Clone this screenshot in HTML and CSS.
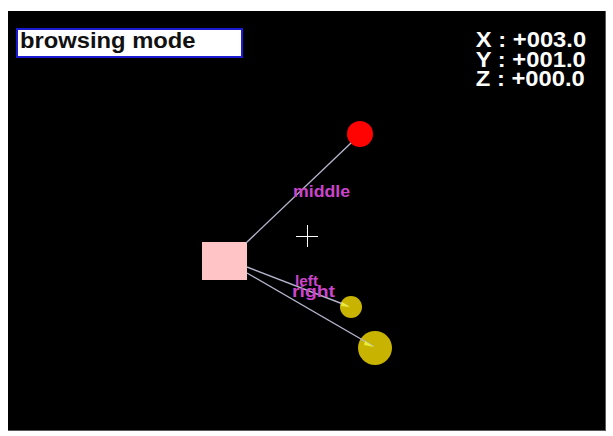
FILE: index.html
```html
<!DOCTYPE html>
<html>
<head>
<meta charset="utf-8">
<link rel="stylesheet" href="styles.css">
</head>
<body>
<div class="screen">
  <svg class="scene" viewBox="8 11 597 419" width="597" height="419" xmlns="http://www.w3.org/2000/svg">
    <circle cx="360" cy="134" r="13" fill="#ff0202"/>
    <circle cx="351" cy="307" r="11" fill="#c8b400"/>
    <circle cx="375" cy="348" r="17" fill="#c8b400"/>
    <rect x="202" y="242" width="45" height="38" fill="#ffc4c6"/>
    <g stroke="#b4b4cc" stroke-width="1.4" fill="none">
      <line x1="246" y1="243" x2="351" y2="143"/>
      <line x1="247" y1="267" x2="348" y2="306"/>
      <line x1="247" y1="273" x2="373" y2="346"/>
    </g>
    <g fill="#ecec30">
      <polygon points="350,307 342,302 341,306"/>
      <polygon points="374,347 365,341 364,345"/>
    </g>
    <g stroke="#ffffff" stroke-width="1" shape-rendering="crispEdges">
      <line x1="296" y1="236.5" x2="318" y2="236.5"/>
      <line x1="307.5" y1="225" x2="307.5" y2="247"/>
    </g>
    <g class="tag">
      <text x="293" y="197" font-size="16" textLength="57" lengthAdjust="spacingAndGlyphs">middle</text>
      <text x="295" y="286" font-size="14" textLength="23" lengthAdjust="spacingAndGlyphs">left</text>
      <text x="292" y="297" font-size="16" textLength="43" lengthAdjust="spacingAndGlyphs">right</text>
    </g>
  </svg>
  <div class="hud">
    <div class="mode"><span class="stretch">browsing mode</span></div>
    <div class="coords">
      <div>X : +003.0</div>
      <div>Y : +001.0</div>
      <div>Z : +000.0</div>
    </div>
  </div>
</div>
</body>
</html>
```
FILE: styles.css
```css
html, body {
  margin: 0;
  padding: 0;
  background: #ffffff;
}

.screen {
  position: relative;
  box-sizing: border-box;
  width: 598px;
  height: 420px;
  margin: 11px 0 0 8px;
  background: #000000;
  border-right: 1px solid #5a5a5a;
  border-bottom: 1px solid #5a5a5a;
  overflow: hidden;
}

.scene {
  position: absolute;
  left: 0;
  top: 0;
  display: block;
}

.tag text {
  fill: #cc44cc;
  font-family: "Liberation Sans", Arial, sans-serif;
  font-weight: bold;
}

.hud {
  position: relative;
  display: flex;
  justify-content: space-between;
  align-items: flex-start;
  padding: 17px 19px 0 8px;
  font-family: "Liberation Sans", Arial, sans-serif;
  font-weight: bold;
  font-size: 22px;
}

.mode {
  box-sizing: border-box;
  width: 227px;
  height: 30px;
  border: 2px solid #1a1ad2;
  background: #ffffff;
  color: #111111;
  padding: 0 2px;
  line-height: 22px;
  white-space: nowrap;
}

.stretch {
  display: inline-block;
  transform: scaleX(1.08);
  transform-origin: left center;
}

.coords {
  margin-top: 2px;
  color: #ffffff;
  line-height: 19.5px;
  white-space: nowrap;
  transform: scaleX(1.08);
  transform-origin: right top;
}
```
